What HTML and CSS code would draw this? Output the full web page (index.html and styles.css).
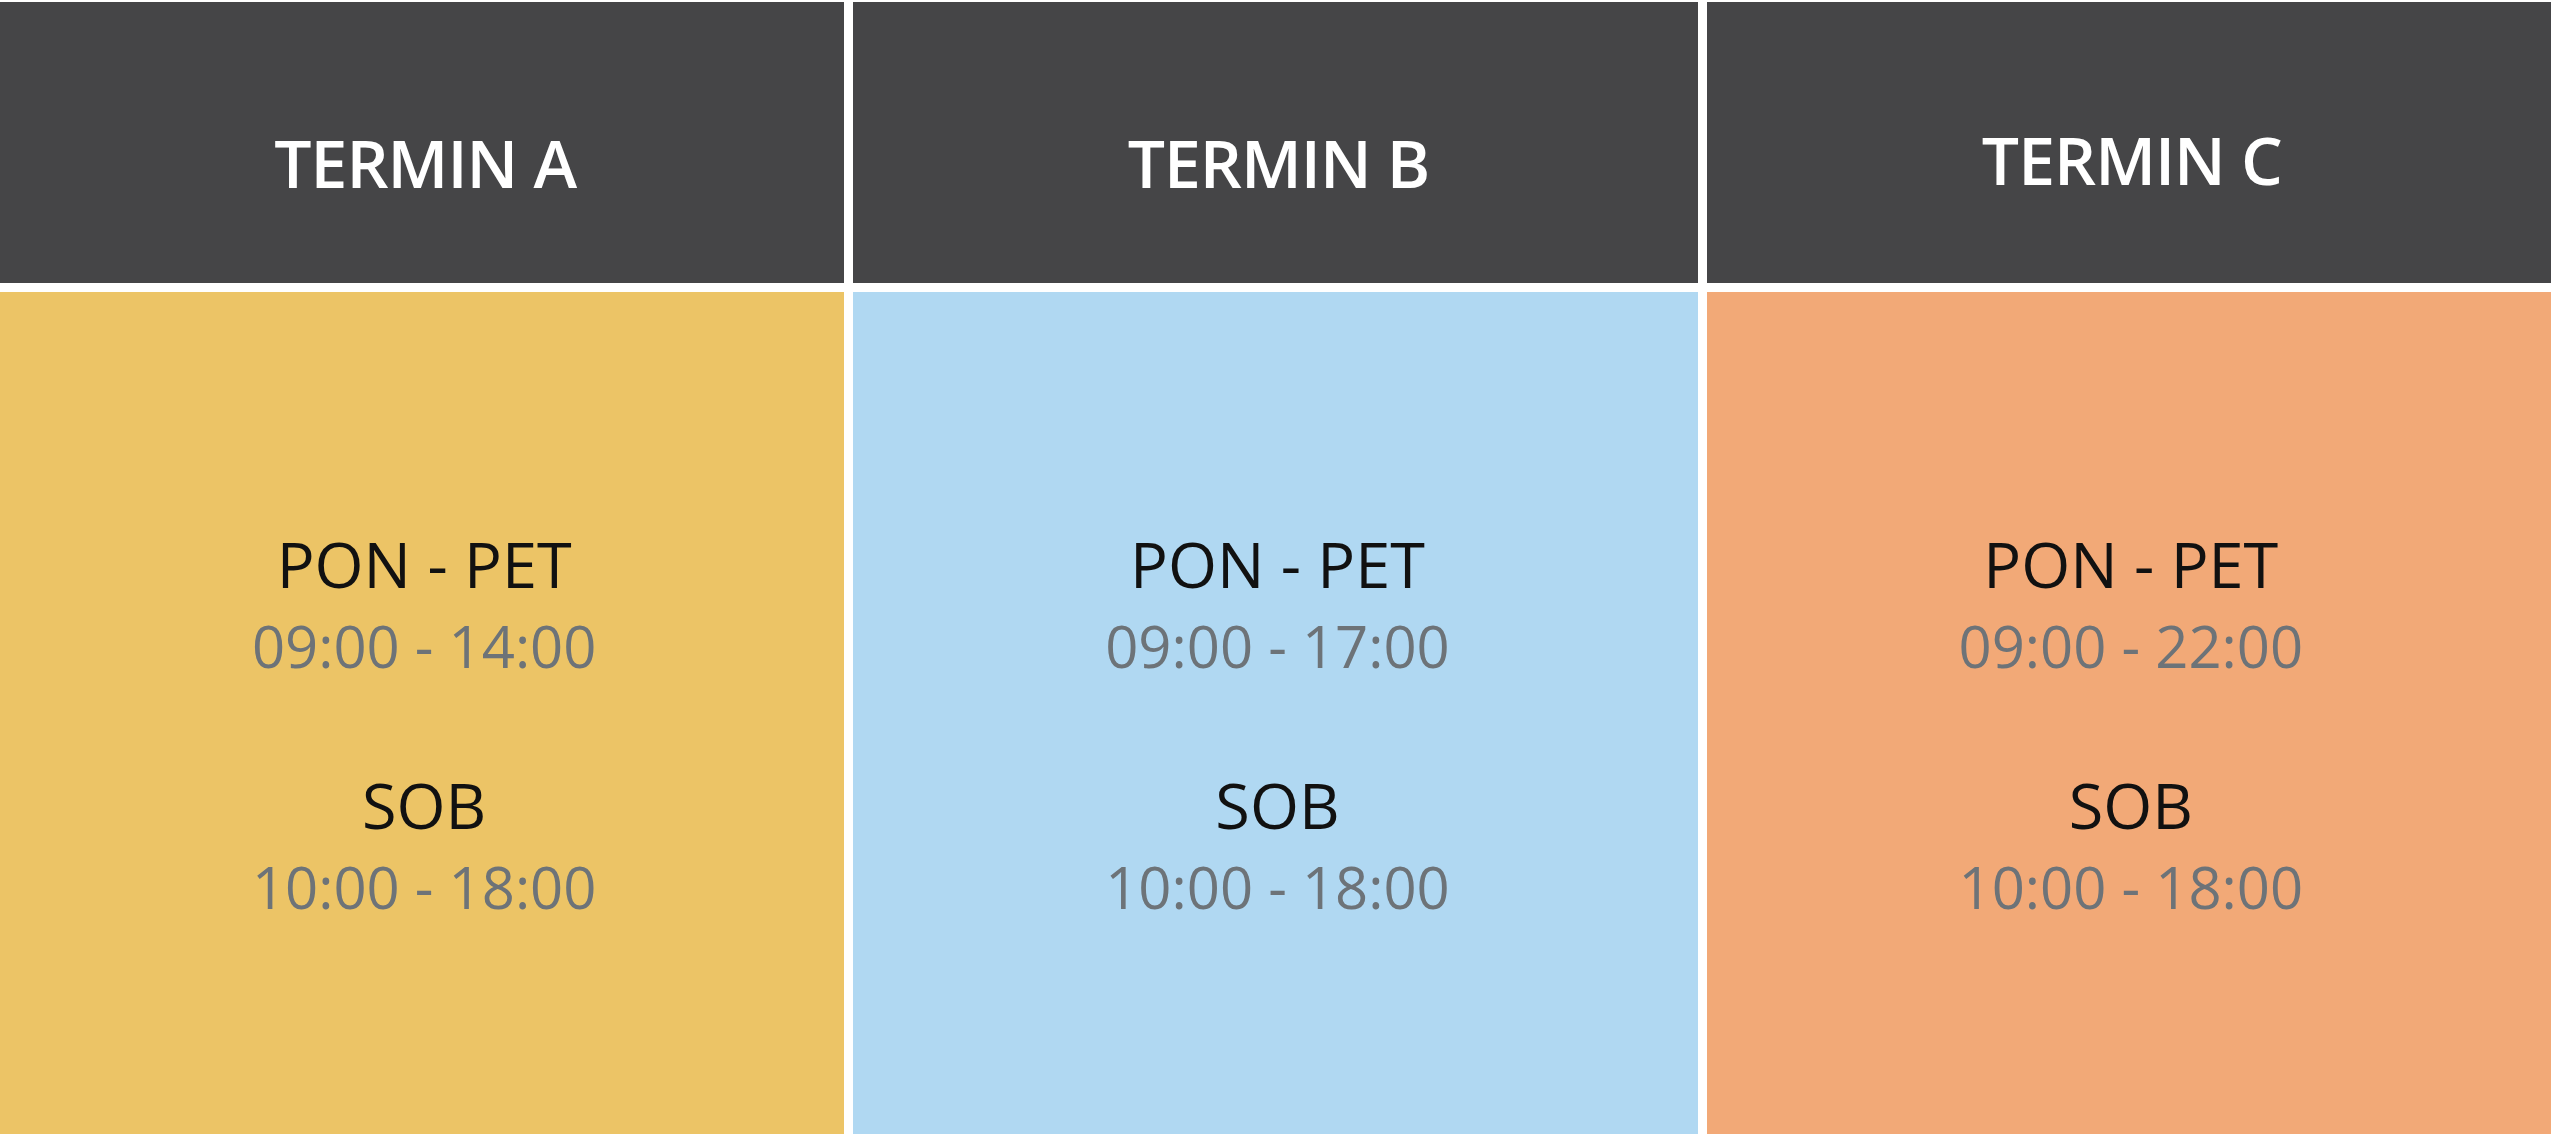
FILE: index.html
```html
<!DOCTYPE html>
<html lang="pl">
<head>
<meta charset="utf-8">
<title>Termini</title>
<link rel="stylesheet" href="styles.css">
</head>
<body>
<main class="schedule">
  <div class="head"><h2 class="head-title">TERMIN A</h2></div>
  <div class="head"><h2 class="head-title">TERMIN B</h2></div>
  <div class="head head--c"><h2 class="head-title">TERMIN C</h2></div>

  <section class="cell cell--a">
    <div class="group">
      <div class="day">PON - PET</div>
      <div class="time">09:00 - 14:00</div>
    </div>
    <div class="group">
      <div class="day">SOB</div>
      <div class="time">10:00 - 18:00</div>
    </div>
  </section>
  <section class="cell cell--b">
    <div class="group">
      <div class="day">PON - PET</div>
      <div class="time">09:00 - 17:00</div>
    </div>
    <div class="group">
      <div class="day">SOB</div>
      <div class="time">10:00 - 18:00</div>
    </div>
  </section>
  <section class="cell cell--c">
    <div class="group">
      <div class="day">PON - PET</div>
      <div class="time">09:00 - 22:00</div>
    </div>
    <div class="group">
      <div class="day">SOB</div>
      <div class="time">10:00 - 18:00</div>
    </div>
  </section>
</main>
</body>
</html>
```

FILE: styles.css
```css
html, body {
  margin: 0;
  padding: 0;
  height: 100%;
  overflow: hidden;
  background: #ffffff;
}

body {
  font-family: "Open Sans", "Noto Sans", "DejaVu Sans", sans-serif;
}

.schedule {
  box-sizing: border-box;
  height: 100vh;
  padding-top: 2px;
  display: grid;
  grid-template-columns: repeat(3, 1fr);
  grid-template-rows: 281px 1fr;
  column-gap: 9px;
  row-gap: 9px;
}

.head {
  background: #454547;
  display: flex;
  align-items: center;
  justify-content: center;
  padding-top: 39px;
  box-sizing: border-box;
}

.head--c {
  padding-top: 33px;
}

.head-title {
  margin: 0;
  color: #ffffff;
  font-size: 66px;
  font-weight: 600;
  line-height: 1;
  letter-spacing: -1px;
  padding-left: 6px;
}

.cell {
  padding-top: 231px;
  display: flex;
  flex-direction: column;
  align-items: center;
  gap: 77px;
  overflow: hidden;
}

.cell--a { background: #ecc466; }
.cell--b { background: #b0d8f2; }
.cell--c { background: #f2a977; }

.group {
  display: flex;
  flex-direction: column;
  align-items: center;
  padding-left: 4px;
}

.day {
  font-size: 63px;
  line-height: 82px;
  color: #111111;
  font-weight: 400;
}

.time {
  font-size: 58px;
  line-height: 82px;
  color: #6d7378;
  font-weight: 400;
}
```
